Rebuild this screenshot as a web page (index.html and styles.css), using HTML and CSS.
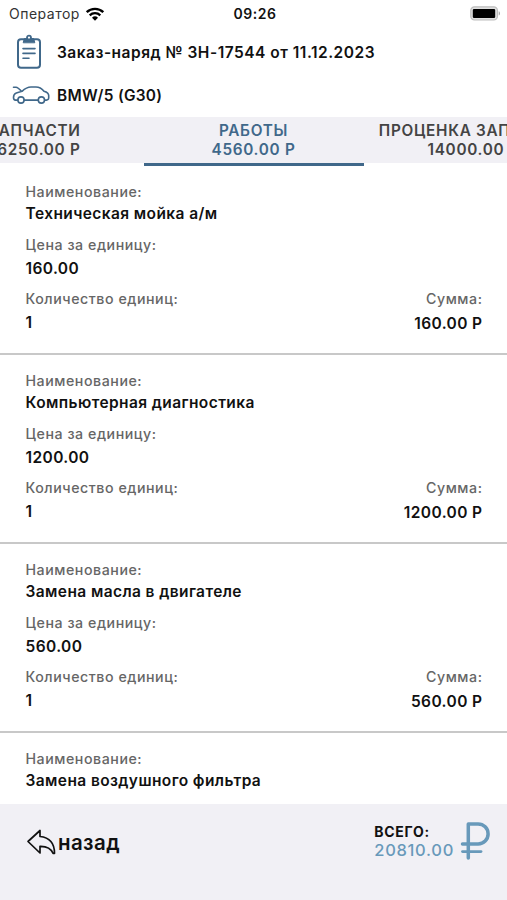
FILE: index.html
```html
<!DOCTYPE html>
<html lang="ru">
<head>
    <meta charset="UTF-8">
    <meta name="viewport" content="width=device-width, initial-scale=1.0">
    <title>Заказ-наряд</title>
    <link rel="stylesheet" href="styles.css">
</head>
<body>
    <div class="screen">
        <div class="status-bar">
            <div class="carrier">
                <span>Оператор</span>
                <svg class="wifi" width="20" height="14" viewBox="0 0 20 14">
                    <path d="M1.7 5.2a12 12 0 0 1 16.6 0" fill="none" stroke="#000" stroke-width="2.4"/>
                    <path d="M4.7 8.3a7.7 7.7 0 0 1 10.6 0" fill="none" stroke="#000" stroke-width="2.3"/>
                    <path d="M10 13.7L7 10.7a4.3 4.3 0 0 1 6 0z"/>
                </svg>
            </div>
            <div class="time">09:26</div>
            <svg class="battery" width="31" height="15" viewBox="0 0 31 15">
                <rect x="0.8" y="0.8" width="26.6" height="13.2" rx="3.6" fill="#e0e0e0" stroke="#bdbdbd" stroke-width="1.2"/>
                <rect x="2.8" y="2.9" width="22.4" height="9" rx="1.2"/>
                <path d="M28.7 5.2c1.7.6 1.7 3.8 0 4.4z" fill="#a8a8a8"/>
            </svg>
        </div>

        <div class="order">
            <svg class="clipboard" width="26" height="36" viewBox="0 0 26 36" fill="none" stroke="#40688a" stroke-linecap="round">
                <rect x="2" y="5.3" width="22" height="28.4" rx="3" stroke-width="2"/>
                <path d="M7.3 8.4L8.3 4.6h9.4l1 3.8z" fill="#40688a" stroke="#40688a" stroke-linejoin="round"/>
                <circle cx="13" cy="3.6" r="2" fill="#fff" stroke-width="1.8"/>
                <path d="M7 14.6h12M7 19.4h12M7 24.2h6" stroke-width="1.6"/>
            </svg>
            <div class="order-title">Заказ-наряд № ЗН-17544 от 11.12.2023</div>
        </div>
        <div class="car">
            <svg class="car-icon" width="38" height="18" viewBox="0 0 38 18" fill="none" stroke="#40688a" stroke-width="1.6" stroke-linecap="round" stroke-linejoin="round">
                <path d="M1.5 1.3H4Q6 1.4 9.5 5.3M5.7 14.1H3.5Q1.5 14 1.5 11.5Q1.5 7.8 4.3 6.9L10 5.3Q14.5 1 19 1H24Q28.5 1 32 5.2Q36.7 6.5 36.7 9.5V12Q36.5 14 34.5 14.1H32.8M26 14.1H12.3"/>
                <circle cx="9" cy="14" r="3.1"/>
                <circle cx="29.4" cy="14" r="3.1"/>
            </svg>
            <div class="car-title">BMW/5 (G30)</div>
        </div>

        <div class="tabs">
            <div class="tab first">
                <span>ЗАПЧАСТИ</span>
                <span>16250.00 Р</span>
            </div>
            <div class="tab active">
                <span>РАБОТЫ</span>
                <span>4560.00 Р</span>
            </div>
            <div class="tab">
                <span>ПРОЦЕНКА ЗАПЧАСТИ</span>
                <span>14000.00 Р</span>
            </div>
        </div>

        <div class="list">
            <div class="item">
                <div class="label">Наименование:</div>
                <div class="value name">Техническая мойка а/м</div>
                <div class="label">Цена за единицу:</div>
                <div class="value">160.00</div>
                <div class="row">
                    <div class="label">Количество единиц:</div>
                    <div class="label">Сумма:</div>
                </div>
                <div class="row">
                    <div class="value">1</div>
                    <div class="value sum">160.00 Р</div>
                </div>
            </div>
            <div class="item">
                <div class="label">Наименование:</div>
                <div class="value name">Компьютерная диагностика</div>
                <div class="label">Цена за единицу:</div>
                <div class="value">1200.00</div>
                <div class="row">
                    <div class="label">Количество единиц:</div>
                    <div class="label">Сумма:</div>
                </div>
                <div class="row">
                    <div class="value">1</div>
                    <div class="value sum">1200.00 Р</div>
                </div>
            </div>
            <div class="item">
                <div class="label">Наименование:</div>
                <div class="value name">Замена масла в двигателе</div>
                <div class="label">Цена за единицу:</div>
                <div class="value">560.00</div>
                <div class="row">
                    <div class="label">Количество единиц:</div>
                    <div class="label">Сумма:</div>
                </div>
                <div class="row">
                    <div class="value">1</div>
                    <div class="value sum">560.00 Р</div>
                </div>
            </div>
            <div class="item">
                <div class="label">Наименование:</div>
                <div class="value name">Замена воздушного фильтра</div>
            </div>
        </div>

        <div class="footer">
            <div class="back">
                <svg width="30" height="26" viewBox="0 0 30 26" fill="none" stroke="#111" stroke-width="1.7" stroke-linejoin="round">
                    <path d="M2 12.5L14 1.5V7.5Q28.500 9 28.500 24.300H27Q24 17 14 17.300V24z"/>
                </svg>
                <span>назад</span>
            </div>
            <div class="total">
                <div class="total-text">
                    <span class="total-label">ВСЕГО:</span>
                    <span class="total-value">20810.00</span>
                </div>
                <svg width="31" height="40" viewBox="0 0 31 40" fill="none" stroke="#6899ba" stroke-linecap="round" stroke-linejoin="round">
                    <path d="M8.3 37V2.9h9.8a10 10 0 0 1 0 20H2.5" stroke-width="3.5"/>
                    <path d="M2.5 30.6h18.5" stroke-width="2.8"/>
                </svg>
            </div>
        </div>
    </div>
</body>
</html>
```
FILE: styles.css
```css
body {
    margin: 0;
    font-family: Inter, "Liberation Sans", sans-serif;
    background-color: #fff;
    color: #111;
}
.screen {
    display: flex;
    flex-direction: column;
    height: 900px;
    overflow: hidden;
}
.status-bar {
    display: grid;
    grid-template-columns: 1fr auto 1fr;
    align-items: center;
    height: 27px;
    padding: 0 6px 0 9px;
    box-sizing: border-box;
    flex-shrink: 0;
}
.carrier {
    display: flex;
    align-items: center;
    gap: 5px;
    font-size: 14px;
    letter-spacing: 0.5px;
    color: #333;
}
.time {
    font-size: 14px;
    font-weight: 600;
    letter-spacing: 0.5px;
}
.battery {
    justify-self: end;
}
.order {
    display: flex;
    align-items: center;
    gap: 15px;
    height: 50px;
    padding-left: 16px;
    flex-shrink: 0;
}
.order-title {
    font-size: 15.5px;
    font-weight: 600;
    letter-spacing: 0.5px;
}
.car {
    display: flex;
    align-items: center;
    gap: 7px;
    height: 36px;
    padding-left: 12px;
    margin-bottom: 4px;
    flex-shrink: 0;
}
.car-title {
    font-size: 15.4px;
    font-weight: 600;
    letter-spacing: 0.3px;
}
.tabs {
    display: flex;
    justify-content: center;
    height: 46px;
    flex-shrink: 0;
    background-color: #f1f0f5;
}
.tab {
    display: flex;
    flex-direction: column;
    align-items: center;
    flex: 0 0 220px;
    height: 49px;
    padding-top: 4px;
    box-sizing: border-box;
    font-size: 15.3px;
    line-height: 19px;
    font-weight: 600;
    letter-spacing: 0.7px;
    color: #444;
    white-space: nowrap;
}
.tab.first {
    align-items: flex-end;
    padding-right: 63px;
}
.tab.active {
    color: #40688a;
    border-bottom: 3px solid #40688a;
}
.list {
    flex: 1;
    overflow: hidden;
    padding-top: 3px;
}
.item {
    height: 189px;
    padding: 16px 24.5px 0 25.5px;
    box-sizing: border-box;
    border-bottom: 2px solid #c8c8c8;
}
.label {
    font-size: 14.2px;
    line-height: 20px;
    font-weight: 500;
    letter-spacing: 0.55px;
    color: #666;
}
.value {
    height: 34px;
    font-size: 15.5px;
    line-height: 27px;
    font-weight: 600;
    letter-spacing: 0.4px;
}
.value.name {
    height: 33px;
    line-height: 24px;
}
.row {
    display: flex;
    justify-content: space-between;
}
.value.sum {
    line-height: 29px;
}
.footer {
    display: flex;
    justify-content: space-between;
    align-items: flex-start;
    height: 96px;
    padding: 17px 16px 0 26px;
    box-sizing: border-box;
    flex-shrink: 0;
    background-color: #f1f0f5;
}
.back {
    display: flex;
    align-items: center;
    gap: 2px;
    height: 42px;
    font-size: 20.5px;
    font-weight: 600;
    letter-spacing: 0.4px;
}
.total {
    display: flex;
    align-items: center;
    gap: 6px;
}
.total-text {
    display: flex;
    flex-direction: column;
    line-height: 19px;
}
.total-label {
    font-size: 14px;
    font-weight: 700;
    letter-spacing: 0.7px;
}
.total-value {
    font-size: 16.5px;
    font-weight: 500;
    letter-spacing: 0.7px;
    color: #6899ba;
}
```
